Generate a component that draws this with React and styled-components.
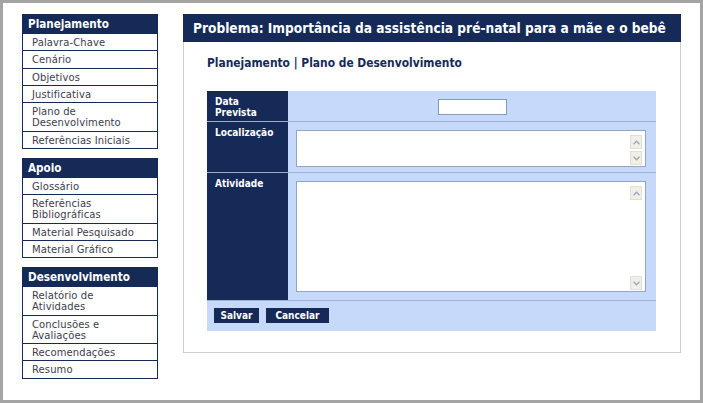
import React from 'react';
import styled, { createGlobalStyle } from 'styled-components';

const NAVY = '#162a58';
const LIGHT = '#c7d9fa';
const LINE = '#9fb0cf';

const GlobalStyle = createGlobalStyle`
  html, body {
    margin: 0;
    padding: 0;
    background: #ffffff;
  }
  body {
    font-family: "DejaVu Sans", Verdana, sans-serif;
  }
`;

const menus = [
  {
    title: 'Planejamento',
    items: ['Palavra-Chave', 'Cenário', 'Objetivos', 'Justificativa', 'Plano de Desenvolvimento', 'Referências Iniciais'],
  },
  {
    title: 'Apoio',
    items: ['Glossário', 'Referências Bibliográficas', 'Material Pesquisado', 'Material Gráfico'],
  },
  {
    title: 'Desenvolvimento',
    items: ['Relatório de Atividades', 'Conclusões e Avaliações', 'Recomendações', 'Resumo'],
  },
];

const Chevron = ({ up }) => (
  <svg width="7" height="5" viewBox="0 0 7 5">
    <path
      d={up ? 'M0.5 4.2 L3.5 1.2 L6.5 4.2' : 'M0.5 0.8 L3.5 3.8 L6.5 0.8'}
      fill="none"
      stroke="#9aa6bf"
      strokeWidth="1.3"
    />
  </svg>
);

const TextBox = ({ height }) => (
  <TextBoxFrame $h={height}>
    <TextInput />
    <ScrollTrack>
      <ScrollButton><Chevron up /></ScrollButton>
      <ScrollButton><Chevron /></ScrollButton>
    </ScrollTrack>
  </TextBoxFrame>
);

const App = () => (
  <>
    <GlobalStyle />
    <Frame>
      <Sidebar>
        {menus.map((menu) => (
          <MenuSection key={menu.title}>
            <MenuHeader>{menu.title}</MenuHeader>
            {menu.items.map((item) => (
              <MenuItem key={item}>{item}</MenuItem>
            ))}
          </MenuSection>
        ))}
      </Sidebar>

      <Panel>
        <PanelHeader>Problema: Importância da assistência pré-natal para a mãe e o bebê</PanelHeader>
        <Breadcrumb>Planejamento | Plano de Desenvolvimento</Breadcrumb>

        <Form>
          <Label $h={31}>Data Prevista</Label>
          <Field $center>
            <DateInput />
          </Field>

          <Label $h={51}>Localização</Label>
          <Field>
            <TextBox height={37} />
          </Field>

          <Label $h={128}>Atividade</Label>
          <Field>
            <TextBox height={111} />
          </Field>

          <ButtonRow>
            <Button $w={45}>Salvar</Button>
            <Button $w={63}>Cancelar</Button>
          </ButtonRow>
        </Form>
      </Panel>
    </Frame>
  </>
);

export default App;

// region STYLES

const Frame = styled.div`
  box-sizing: border-box;
  width: 703px;
  height: 403px;
  border: 3px solid #a4a4a4;
  background: #ffffff;
  display: flex;
  align-items: flex-start;
  gap: 25px;
  padding: 11px 0 0 19px;
`;

const Sidebar = styled.div`
  width: 136px;
  display: flex;
  flex-direction: column;
  gap: 9px;
`;

const MenuSection = styled.div`
  border: 1px solid ${NAVY};
  background: #ffffff;
`;

const MenuHeader = styled.div`
  background: ${NAVY};
  color: #ffffff;
  height: 19px;
  line-height: 19px;
  padding-left: 5px;
  font-family: "DejaVu Sans Condensed", "DejaVu Sans", Verdana, sans-serif;
  font-stretch: condensed;
  font-weight: bold;
  font-size: 11.6px;
`;

const MenuItem = styled.div`
  padding: 3px 22px 2px 9px;
  font-size: 10px;
  line-height: 11.25px;
  letter-spacing: 0.1px;
  color: #3d3d4e;
  & + & {
    border-top: 1px solid ${NAVY};
  }
`;

const Panel = styled.div`
  box-sizing: border-box;
  width: 498px;
  border: 1px solid #cdcdcd;
  border-top: 0;
  padding-bottom: 21px;
`;

const PanelHeader = styled.div`
  margin: 0 -1px;
  height: 28px;
  line-height: 28px;
  padding-left: 10px;
  background: ${NAVY};
  color: #ffffff;
  font-family: "DejaVu Sans Condensed", "DejaVu Sans", Verdana, sans-serif;
  font-stretch: condensed;
  font-weight: bold;
  font-size: 13.6px;
  white-space: nowrap;
`;

const Breadcrumb = styled.div`
  padding: 13px 0 0 23px;
  line-height: 16px;
  color: ${NAVY};
  font-family: "DejaVu Sans Condensed", "DejaVu Sans", Verdana, sans-serif;
  font-stretch: condensed;
  font-weight: bold;
  font-size: 11.9px;
`;

const Form = styled.div`
  margin: 20px 0 0 23px;
  width: 449px;
  display: grid;
  grid-template-columns: 81px 1fr;
  background: ${LIGHT};
`;

const Label = styled.div`
  box-sizing: content-box;
  height: ${(p) => p.$h - 6}px;
  padding: 5px 8px 0 8px;
  background: ${NAVY};
  border-bottom: 1px solid ${LINE};
  color: #ffffff;
  font-family: "DejaVu Sans Condensed", "DejaVu Sans", Verdana, sans-serif;
  font-stretch: condensed;
  font-weight: bold;
  font-size: 10px;
  line-height: 11px;
`;

const Field = styled.div`
  background: ${LIGHT};
  border-bottom: 1px solid ${LINE};
  display: flex;
  align-items: ${(p) => (p.$center ? 'center' : 'flex-start')};
  justify-content: ${(p) => (p.$center ? 'center' : 'flex-start')};
  padding: ${(p) => (p.$center ? '0' : '8px 0 0 8px')};
  box-sizing: border-box;
`;

const DateInput = styled.input.attrs({ type: 'text' })`
  box-sizing: border-box;
  width: 69px;
  height: 16px;
  margin-top: 1px;
  border: 1px solid #7f9db9;
  background: #ffffff;
  padding: 0 2px;
  outline: none;
`;

const TextBoxFrame = styled.div`
  box-sizing: border-box;
  width: 350px;
  height: ${(p) => p.$h}px;
  border: 1px solid #8fa6c6;
  background: #ffffff;
  display: flex;
`;

const TextInput = styled.textarea`
  flex: 1;
  border: 0;
  margin: 0;
  padding: 2px;
  resize: none;
  outline: none;
  background: transparent;
`;

const ScrollTrack = styled.div`
  width: 15px;
  display: flex;
  flex-direction: column;
  justify-content: space-between;
  padding: 4px 1px 1px 0;
  box-sizing: border-box;
`;

const ScrollButton = styled.div`
  width: 12px;
  height: 14px;
  box-sizing: border-box;
  background: #f1efe6;
  border: 1px solid #e2e0d6;
  display: flex;
  align-items: center;
  justify-content: center;
`;

const ButtonRow = styled.div`
  grid-column: 1 / -1;
  height: 30px;
  box-sizing: border-box;
  padding: 7px 7px 0;
  display: flex;
  gap: 7px;
  align-items: flex-start;
`;

const Button = styled.button`
  width: ${(p) => p.$w}px;
  height: 15px;
  padding: 0;
  border: 0;
  background: ${NAVY};
  color: #ffffff;
  font-family: "DejaVu Sans Condensed", "DejaVu Sans", Verdana, sans-serif;
  font-stretch: condensed;
  font-weight: bold;
  font-size: 10px;
  line-height: 15px;
  cursor: pointer;
`;

// endregion
